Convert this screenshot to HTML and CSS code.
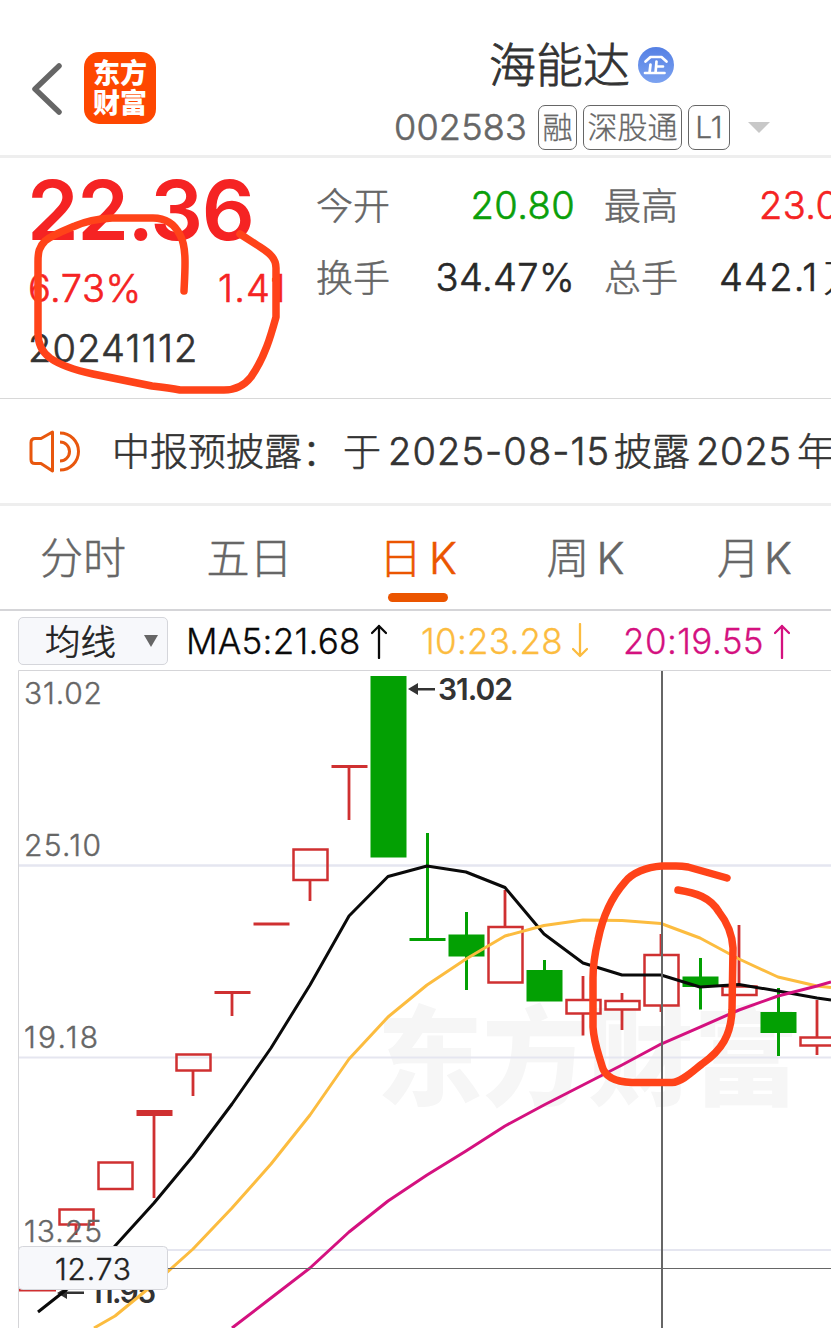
FILE: index.html
```html
<!DOCTYPE html>
<html lang="zh-CN">
<head>
<meta charset="utf-8">
<title>海能达 002583</title>
<link rel="stylesheet" href="styles.css">
</head>
<body>
<main class="app">
  <header class="header">
    <svg class="back" viewBox="0 0 30 52" width="30" height="52"><path d="M27 3 3 26 27 49" /></svg>
    <div class="logo"><span>东方</span><span>财富</span></div>
    <div class="title">
      <div class="name"><span class="name-text">海能达</span>
        <svg class="ent" viewBox="0 0 36 36" width="36" height="36">
          <defs><linearGradient id="eg" x1="0" y1="0" x2="0" y2="1"><stop offset="0" stop-color="#5580e4"/><stop offset="1" stop-color="#7ba2f0"/></linearGradient></defs>
          <circle cx="18" cy="18" r="18" fill="url(#eg)"/>
          <path d="M7.500 14.500 12.500 10H23.500L28.500 14.500M18.500 14.500 17.500 26M12.500 17.500 11.500 26M18 19.500H25M7 26H26.500" fill="none" stroke="#fff" stroke-width="2.700" stroke-linecap="round" stroke-linejoin="round"/>
        </svg>
      </div>
      <div class="codes"><span class="code">002583</span><span class="tag t1">融</span><span class="tag t2">深股通</span><span class="tag t3">L1</span><i class="caret"></i></div>
    </div>
  </header>

  <section class="quote">
    <div class="price-col">
      <div class="price">22.36</div>
      <div class="change"><span class="pct">6.73%</span><span class="diff">1.41</span></div>
      <div class="date">20241112</div>
    </div>
    <div class="stats">
      <span class="label">今开</span><span class="val green">20.80</span><span class="label">最高</span><span class="val last red">23.05</span>
      <span class="label">换手</span><span class="val">34.47%</span><span class="label">总手</span><span class="val last2">442.1<span class="wan">万</span></span>
    </div>
  </section>

  <section class="notice">
    <svg class="horn" viewBox="0 0 52 44" width="52" height="44"><path d="M23.500 3 12 9.500H6Q2 9.500 2 13.500V30.500Q2 34.500 6 34.500H12L23.500 42ZM31 4A18.500 18.500 0 0 1 31 41M31 13A9.500 9.500 0 0 1 31 32" /></svg>
    <p class="notice-text"><span class="n1">中报预披露：</span><span class="n2">于</span><span class="n3">2025-08-15</span><span class="n4">披露</span><span class="n5">2025</span><span class="n6">年</span></p>
  </section>

  <nav class="tabs">
    <a class="tab">分时</a><a class="tab">五日</a><a class="tab active">日<b>K</b></a><a class="tab">周<b>K</b></a><a class="tab">月<b>K</b></a>
  </nav>

  <section class="ma">
    <div class="select"><span>均线</span><i class="down"></i></div>
    <div class="m m5"><span>MA5:21.68</span><svg viewBox="0 0 16 36" width="16" height="36"><path d="M8 35V3M1 10 8 3 15 10"/></svg></div>
    <div class="m m10"><span>10:23.28</span><svg viewBox="0 0 16 36" width="16" height="36"><path d="M8 1V33M1 26 8 33 15 26"/></svg></div>
    <div class="m m20"><span>20:19.55</span><svg viewBox="0 0 16 36" width="16" height="36"><path d="M8 35V3M1 10 8 3 15 10"/></svg></div>
  </section>

  <svg class="chart" viewBox="0 670 831 658" width="831" height="658">
    <text class="mark" x="377" y="1097" textLength="422" lengthAdjust="spacingAndGlyphs">东方财富</text>
    <g class="grid">
      <path d="M18 865.500H831" stroke-width="2.500"/><path d="M18 1057.500H831M18 1250H831" stroke-width="2"/>
    </g>
    <path class="frame" d="M831 670.500H18.500V1328"/>
    <g class="up">
      <path d="M19 1290H56M76 1225V1235M154 1113V1198M193 1071V1096M214.500 992.500H250.500M232 992V1016M253.500 924H289.500M310 881V901M331.500 766.500H367.500M349 766V820M505 890V926M583 976V999M583 1014V1035.500M622 993V1000M622 1010V1030M661 934V954M661 1006V1012M739 925V986M817 1000V1037M817 1046V1055"/>
      <path d="M136.500 1113H172.500" stroke-width="6"/>
      <path class="box" d="M59.500 1209.500H93.500V1224.500H59.500ZM98.500 1162.500H132.500V1189H98.500ZM176.500 1054.500H210.500V1070.500H176.500ZM293.500 849.500H327.500V880H293.500ZM488.500 927H522.500V982.500H488.500ZM566.500 1000H600.500V1013.500H566.500ZM605.500 1001H639.500V1009.500H605.500ZM644.500 955H678.500V1005.500H644.500ZM722.500 986.500H756.500V995H722.500ZM800.500 1037.500H834.500V1045.500H800.500Z"/>
    </g>
    <g class="fall">
      <path class="body" d="M370.500 676H406.500V857.500H370.500ZM448.500 934.500H484.500V956.500H448.500ZM526.500 970H562.500V1001.500H526.500ZM682.500 976.500H718.500V987H682.500ZM760.500 1012H796.500V1033H760.500Z"/>
      <path d="M427.500 833V939M409.500 939.500H445.500M466.500 912V990M544.500 960V975M700.500 958V1009.500M778.500 988V1056"/>
    </g>
    <g class="axis">
      <text x="24" y="703.500" textLength="78">31.02</text><text x="24" y="855.500" textLength="77">25.10</text>
      <text x="24" y="1048" textLength="74">19.18</text><text x="24" y="1242" textLength="78">13.25</text>
    </g>
    <g class="peak">
      <path d="M408 689 418 683V695ZM415 688H435V690.500H415ZM57 1293 67 1287V1299ZM64 1291.500H84V1294H64Z"/>
      <text x="438" y="700" textLength="75">31.02</text><text x="90" y="1303" textLength="66">11.95</text>
    </g>
    <g class="lines">
      <path stroke="#0a0a0a" d="M38 1312 76 1282 115 1246 154 1203 193 1156 232 1104 271 1048 310 985 349 916 388 876.500 427 866 466 872 505 887.500 544 934 583 963 622 975 661 975 700 987 739 984.500 778 991 817 998 831 1000"/>
      <path stroke="#fcbc3f" d="M94 1328 115 1316 154 1284 193 1249 232 1208 271 1164 310 1115 349 1059 388 1017 427 985 466 959 505 936 544 925.500 583 920 622 920.500 661 923.500 700 938 739 959 778 977 817 986 831 987.500"/>
      <path stroke="#d4117f" d="M232 1328 271 1298 310 1268 349 1232 388 1201 427 1175 466 1151 505 1126 544 1105 583 1085 622 1065 661 1044 700 1027 739 1010 778 996 817 986 831 982"/>
    </g>
    <path d="M662 671V1328" stroke="#666" stroke-width="2"/><path d="M167 1268.500H831" stroke="#666" stroke-width="1"/>
    <rect x="18.500" y="1246.500" width="149" height="43" rx="4" fill="#f7f8fb" stroke="#d5d6db"/>
    <text class="cursor" x="55" y="1280" textLength="76">12.73</text>
  </svg>

  <svg class="ink" viewBox="0 0 831 1328" width="831" height="1328">
    <path d="M184 291C185 270 187 247 180 235 174 223 164 218 153 218H112C96 219 84 222 75 226 63 231 52 235 45 241 39 247 38 252 38 262V333C38 344 42 352 50 358 60 365 74 370 93 374L152 386C161 387 170 388 180 390H224C236 390 244 386 251 377 265 357 271 335 276 317V268C276 256 266 251 257 245L240 234"/>
    <path d="M727 878 688 867Q682 866 676 866H662C646 867 632 873 625 882 609 900 602 920 598 940 595 953 593 966 593 978V1027C594 1044 599 1055 602 1066 605 1078 618 1082 632 1082.500H672C682 1082 693 1071 702 1064 722 1050 731 1035 732 1010L733 948C732 932 727 922 719 912 710 897 696 893 678 890"/>
  </svg>
</main>
</body>
</html>
```
FILE: styles.css
```css
* { box-sizing: border-box; }
body { margin: 0; background: #fff; font-family: Inter, "Noto Sans CJK SC", sans-serif; }
.app { position: relative; width: 831px; height: 1328px; overflow: hidden; display: flex; flex-direction: column; }
.app > * { flex: none; }

.header { height: 158px; border-bottom: 3px solid #eee; display: flex; align-items: flex-start; padding-left: 32px; }
.back { margin-top: 63px; fill: none; stroke: #666; stroke-width: 5.500; stroke-linecap: round; stroke-linejoin: round; }
.logo { margin: 52px 0 0 22px; width: 72px; height: 72px; border-radius: 15px; background: #fe4700; color: #fff; font-size: 27px; font-weight: 900; line-height: 30px; padding-top: 7px; display: flex; flex-direction: column; align-items: center; }
.title { margin-left: 238px; padding-top: 30px; }
.name { display: flex; align-items: center; height: 68px; margin-left: 95px; color: #333; gap: 8px; }
.ent { margin-top: 2px; }
.name-text { font-size: 47px; font-weight: 300; line-height: 68px; padding-top: 2px; -webkit-text-stroke: 0.8px currentColor; }
.codes { display: flex; align-items: center; height: 58px; color: #666; }
.code { font-size: 36px; font-weight: 300; width: 144px; letter-spacing: 0.2px; -webkit-text-stroke: 0.6px currentColor; }
.tag { height: 45px; border: 1.500px solid #666; border-radius: 7px; font-size: 30px; font-weight: 300; line-height: 43px; text-align: center; white-space: nowrap; -webkit-text-stroke: 0.3px currentColor; }
.t1 { width: 39px; }
.t2 { width: 99px; margin-left: 6px; }
.t3 { width: 42px; margin-left: 6px; }
.caret { margin-left: 18px; border: 11px solid transparent; border-top-color: #c8c8c8; border-bottom: 0; }

.quote { height: 241px; border-bottom: 1px solid #d8d8d8; display: flex; padding-left: 28px; }
.price-col { flex: none; width: 288px; padding-top: 12px; }
.price { font-size: 83px; line-height: 80px; font-weight: 600; color: #f52323; letter-spacing: -1.500px; margin-left: -1px; }
.change { display: flex; color: #f52323; font-size: 38px; font-weight: 300; line-height: 60px; padding-top: 8px; -webkit-text-stroke: 0.600px currentColor; }
.pct { width: 190px; letter-spacing: 0.500px; }
.diff { letter-spacing: 1.200px; }
.date { color: #333; font-size: 38px; font-weight: 300; line-height: 60px; letter-spacing: 1.200px; -webkit-text-stroke: 0.600px currentColor; }
.stats { flex: none; display: grid; grid-template-columns: 75px 184px 104px 200px; grid-template-rows: 72px 72px; padding-top: 11px; line-height: 72px; }
.label { font-size: 37px; font-weight: 300; color: #666; padding-top: 2px; -webkit-text-stroke: 0.5px currentColor; }
.label:nth-child(4n+3) { padding-left: 29px; }
.val { font-size: 38px; font-weight: 300; color: #282828; text-align: right; white-space: nowrap; letter-spacing: 0.400px; -webkit-text-stroke: 0.600px currentColor; }
.last { text-align: left; padding-left: 80px; }
.last2 { text-align: left; padding-left: 40px; letter-spacing: 1.200px; }
.wan { margin-left: 5px; }
.val.green { color: #0a9f0a; }
.val.red { color: #f52323; }

.notice { height: 107px; border-bottom: 3px solid #eee; display: flex; align-items: center; padding-left: 29px; color: #333; }
.horn { flex: none; fill: none; stroke: #e8570e; stroke-width: 3; stroke-linejoin: round; }
.notice-text { display: flex; margin: 0; padding-left: 31px; font-size: 38px; font-weight: 300; line-height: 60px; white-space: nowrap; }
.notice-text span { flex: none; -webkit-text-stroke: 0.600px currentColor; }
.notice-text .n1 { width: 231px; }
.notice-text .n2 { width: 45px; }
.notice-text .n3 { width: 226px; letter-spacing: 1.100px; }
.notice-text .n4 { width: 82px; }
.notice-text .n5 { width: 101px; letter-spacing: 0.800px; }

.tabs { height: 105px; border-bottom: 2px solid #d5d5d8; display: flex; padding-left: 40px; }
.tab { position: relative; flex: none; width: 168.500px; font-size: 43px; font-weight: 300; line-height: 104px; color: #666; white-space: nowrap; -webkit-text-stroke: 0.500px currentColor; }
.tab b { font-weight: 300; margin-left: 7px; }
.tab:nth-child(2) { text-indent: -2px; }
.tab:nth-child(3) { padding-left: 2px; }
.tab:nth-child(4) { padding-left: 1px; }
.tab:nth-child(5) { padding-left: 3px; }
.tab:nth-child(5) b { margin-left: 4px; }
.tab.active { color: #eb5500; }
.active::after { content: ""; position: absolute; left: 11px; bottom: 7px; width: 60px; height: 9px; border-radius: 5px; background: #eb5500; }

.ma { height: 59px; display: flex; align-items: center; padding: 0 0 0 18px; }
.select { flex: none; width: 150px; height: 48px; margin-top: 1px; border: 1px solid #d5d6db; border-radius: 5px; background: #f7f8fb; color: #222; font-size: 35.500px; font-weight: 300; line-height: 46px; display: flex; align-items: center; padding-left: 26px; }
.select span { padding-top: 4px; -webkit-text-stroke: 0.600px currentColor; }
.down { margin-left: 28px; border: 7px solid transparent; border-top: 12px solid #666; border-bottom: 0; }
.m { flex: none; display: flex; align-items: center; font-size: 35px; font-weight: 300; white-space: nowrap; letter-spacing: 0.250px; }
.m span { -webkit-text-stroke: 0.300px currentColor; }
.m svg { fill: none; stroke: currentColor; stroke-width: 2.300; stroke-linecap: round; stroke-linejoin: round; }
.m5 { margin-left: 18px; width: 235px; color: #0a0a0a; }
.m5 span { width: 185px; }
.m10 { width: 202px; color: #fcbc3f; }
.m10 span { width: 151px; }
.m20 { color: #d4117f; }
.m20 span { width: 151px; letter-spacing: 0.400px; }

.chart { display: block; font-family: Inter, "Noto Sans CJK SC", sans-serif; }
.mark { font-size: 108px; font-weight: 900; fill: #f6f6f6; }
.grid { stroke: #e5e6f0; }
.frame { fill: none; stroke: #d5d5d8; }
.up { fill: none; stroke: #cf3031; stroke-width: 2.800; }
.up .box { stroke-width: 2.500; }
.fall { stroke: #03a003; stroke-width: 3; }
.fall .body { fill: #03a003; stroke: none; }
.axis text { font-size: 30px; font-weight: 300; fill: #666; stroke: #666; stroke-width: 0.400; }
.peak { fill: #333; }
.peak text { font-size: 30px; font-weight: 600; }
.lines { fill: none; stroke-width: 3; stroke-linejoin: round; }
.cursor { font-size: 30px; font-weight: 300; fill: #222; stroke: #222; stroke-width: 0.400; }
.ink { position: absolute; left: 0; top: 0; fill: none; stroke: #ff4319; stroke-width: 7.500; stroke-linecap: round; stroke-linejoin: round; pointer-events: none; }
```
